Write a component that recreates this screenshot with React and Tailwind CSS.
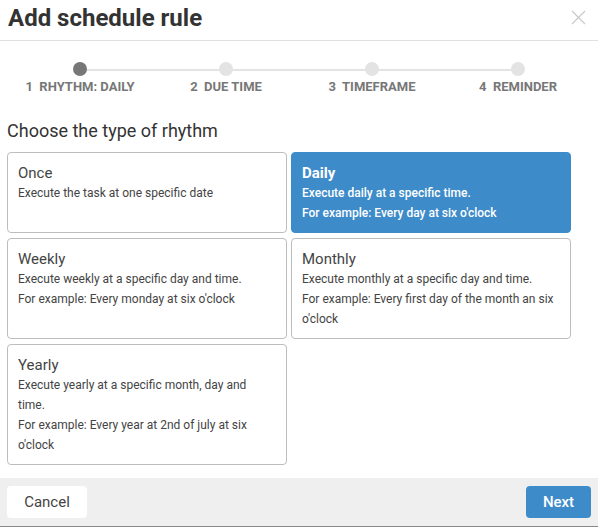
import React, { useState } from 'react';

const steps = [
  { n: 1, label: 'RHYTHM: DAILY', active: true },
  { n: 2, label: 'DUE TIME' },
  { n: 3, label: 'TIMEFRAME' },
  { n: 4, label: 'REMINDER' },
];

const rhythms = [
  { id: 'once', title: 'Once', lines: ['Execute the task at one specific date'] },
  { id: 'daily', title: 'Daily', lines: ['Execute daily at a specific time.', "For example: Every day at six o'clock"] },
  { id: 'weekly', title: 'Weekly', lines: ['Execute weekly at a specific day and time.', "For example: Every monday at six o'clock"] },
  { id: 'monthly', title: 'Monthly', lines: ['Execute monthly at a specific day and time.', "For example: Every first day of the month an six o'clock"] },
  { id: 'yearly', title: 'Yearly', lines: ['Execute yearly at a specific month, day and time.', "For example: Every year at 2nd of july at six o'clock"] },
];

export default function App() {
  const [selected, setSelected] = useState('daily');

  return (
    <div className="w-[598px] h-[527px] bg-white flex flex-col text-[#333] overflow-hidden" style={{ fontFamily: 'Roboto, "Liberation Sans", sans-serif' }}>
      {/* Header */}
      <div className="h-[41px] shrink-0 flex items-center justify-between pl-[8px] pr-[12px] border-b border-[#e0e0e0]">
        <h2 className="text-[24px] font-bold leading-none text-[#333] -mt-[4px]">Add schedule rule</h2>
        <button className="text-[#c8c8c8] -mt-[6px]">
          <svg width="15" height="15" viewBox="0 0 15 15" fill="none" stroke="currentColor" strokeWidth="1.1">
            <path d="M1 1L14 14M14 1L1 14" />
          </svg>
        </button>
      </div>

      {/* Body */}
      <div className="flex-1 px-[7px]">
        {/* Stepper */}
        <div className="relative grid grid-cols-4 mt-[21px]">
          <div className="absolute left-[73px] right-[73px] top-[7px] h-[2px] bg-[#e3e3e3]" />
          {steps.map((s) => (
            <div key={s.n} className="relative flex flex-col items-center">
              <div className={`w-[14px] h-[14px] rounded-full ${s.active ? 'bg-[#777]' : 'bg-[#e3e3e3]'}`} />
              <div className="mt-[3px] text-[13px] font-bold text-[#777] leading-[16px] whitespace-pre">
                {s.n}{'  '}{s.label}
              </div>
            </div>
          ))}
        </div>

        <h3 className="mt-[26px] text-[18px] leading-[20px] text-[#333]">Choose the type of rhythm</h3>

        <div className="mt-[11px] w-[564px] grid grid-cols-2 gap-x-[4px] gap-y-[5px] items-stretch">
          {rhythms.map((r) => {
            const on = selected === r.id;
            return (
              <div
                key={r.id}
                onClick={() => setSelected(r.id)}
                className={`cursor-pointer rounded-[4px] px-[10px] pt-[10px] pb-[9px] ${
                  on ? 'bg-[#3d8bc9] border border-[#3d8bc9] text-white' : 'bg-white border border-[#bdbdbd] text-[#444]'
                }`}
              >
                <div className={`text-[15px] leading-[20px] ${on ? 'font-bold' : 'text-[#444]'}`}>{r.title}</div>
                {r.lines.map((l, i) => (
                  <div key={i} className={`text-[12px] leading-[20px] ${on ? 'font-medium' : ''}`}>{l}</div>
                ))}
              </div>
            );
          })}
        </div>
      </div>

      {/* Footer */}
      <div className="h-[49px] shrink-0 bg-[#efefef] flex items-center justify-between px-[7px] border-b border-[#888]">
        <button className="h-[32px] w-[80px] bg-white rounded-[4px] text-[15px] text-[#444]">Cancel</button>
        <button className="h-[32px] w-[65px] bg-[#3d8bc9] rounded-[4px] text-[15px] font-medium text-white">Next</button>
      </div>
    </div>
  );
}
